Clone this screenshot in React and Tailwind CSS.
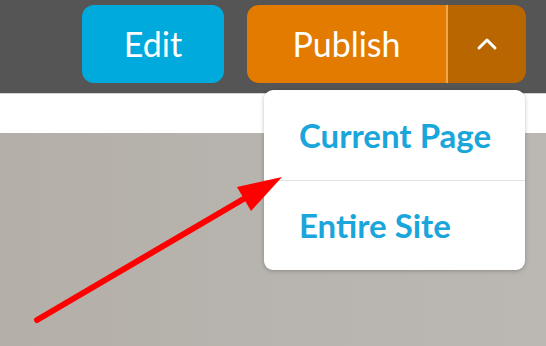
import React from "react";

const font = { fontFamily: "Lato, 'Open Sans', sans-serif" };

export default function App() {
  return (
    <div className="relative w-[546px] h-[346px] overflow-hidden bg-white" style={font}>
      <div className="h-[93px] bg-[#555555] flex justify-end items-start pt-[5px] pr-[20px] gap-[23px]">
        <button className="w-[142px] h-[78px] rounded-[12px] bg-[#00aadc] text-white text-[34px] leading-none flex items-center justify-center">
          Edit
        </button>
        <div className="flex h-[78px] w-[279px] rounded-[12px] overflow-hidden">
          <button className="w-[199px] bg-[#e27b00] text-white text-[34px] leading-none flex items-center justify-center">
            Publish
          </button>
          <div className="w-[2px] bg-[#f3a44c]" />
          <button className="flex-1 bg-[#b96500] flex items-center justify-center">
            <svg width="24" height="24" viewBox="0 0 24 24" fill="none" stroke="white" strokeWidth="3" strokeLinecap="round" strokeLinejoin="round">
              <polyline points="4 16 12 8 20 16" />
            </svg>
          </button>
        </div>
      </div>
      <div className="h-[1px] bg-[#d4d4d4]" />
      <div className="h-[39px] bg-white" />
      <div className="h-[213px] bg-gradient-to-r from-[#b4afa8] to-[#bbb8b4]" />

      <div className="absolute left-[264px] top-[90px] w-[261px] h-[180px] bg-white rounded-[9px] shadow-[0_1px_4px_rgba(0,0,0,0.25)] flex flex-col">
        <div className="h-[90px] flex items-center pl-[35px] text-[33px] font-bold text-[#1aa6db] leading-none">
          Current Page
        </div>
        <div className="h-[1px] bg-[#e2e2e2]" />
        <div className="flex-1 flex items-center pl-[35px] text-[33px] font-bold text-[#1aa6db] leading-none">
          Entire Site
        </div>
      </div>

      <svg className="absolute left-0 top-0" width="546" height="346" viewBox="0 0 546 346">
        <line x1="37" y1="320" x2="252" y2="194" stroke="#ff0000" strokeWidth="6" strokeLinecap="round" />
        <polygon points="282,177 237,187 251,211" fill="#ff0000" />
      </svg>
    </div>
  );
}
